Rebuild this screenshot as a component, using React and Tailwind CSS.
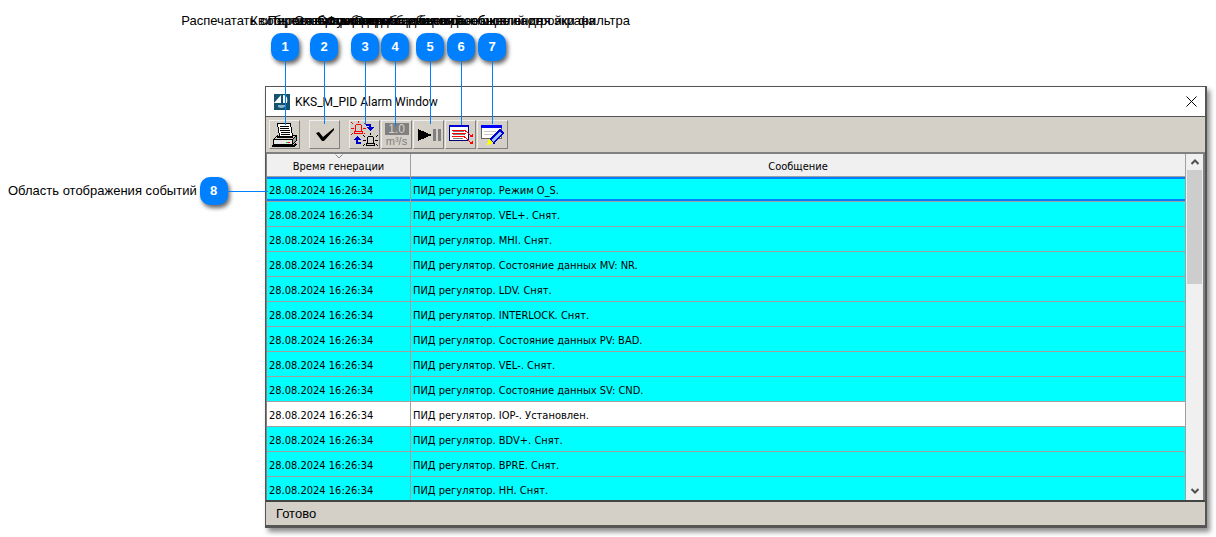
import React from 'react';

const callouts = [
    { n: 1, pos: 'left-[271px]', line: 'h-[64px]', text: 'Распечатать события на принтере' },
    { n: 2, pos: 'left-[310px]', line: 'h-[63px]', text: 'Квитировать сообщения' },
    { n: 3, pos: 'left-[351px]', line: 'h-[64px]', text: 'Переключить режим сообщений' },
    { n: 4, pos: 'left-[381px]', line: 'h-[65px]', text: 'Отобразить сообщения о данных' },
    { n: 5, pos: 'left-[416px]', line: 'h-[63px]', text: 'Остановить/возобновить обновление' },
    { n: 6, pos: 'left-[447px]', line: 'h-[64px]', text: 'Функция добавления сообщений для экрана' },
    { n: 7, pos: 'left-[478px]', line: 'h-[63px]', text: 'Открыть диалоговое окно настройки фильтра' },
];

const events = [
    'Режим O_S.',
    'VEL+. Снят.',
    'MHI. Снят.',
    'Состояние данных MV: NR.',
    'LDV. Снят.',
    'INTERLOCK. Снят.',
    'Состояние данных PV: BAD.',
    'VEL-. Снят.',
    'Состояние данных SV: CND.',
    'IOP-. Установлен.',
    'BDV+. Снят.',
    'BPRE. Снят.',
    'HH. Снят.',
];

const Badge = ({ children }) => (
    <span className="flex size-7 items-center justify-center rounded-[10px] bg-[#0080ff] text-[13px] font-bold text-white shadow-[2px_3px_4px_rgba(0,0,0,0.6)]">
        {children}
    </span>
);

const PrinterIcon = () => (
    <svg className="shrink-0" width="26" height="26" viewBox="0 0 26 26" shapeRendering="crispEdges">
        <path d="M5.5 1.5h13l2 13h-13z" fill="#fff" stroke="#000" />
        <path d="M8 4.5h9M8 6.5h9M8 8.5h10M9 10.5h9M9 12.5h9" stroke="#000" />
        <path d="M5.5 13.5l-4 4h19l4-4h-4" fill="#d4d0c8" stroke="#000" />
        <path d="M5 14.5h16" stroke="#000" strokeWidth="2" />
        <path d="M1.5 17.5h19v5h-19z" fill="#e8e8e8" stroke="#000" />
        <path d="M20.5 17.5l4-4v5l-4 4z" fill="#a0a0a0" stroke="#000" />
        <path d="M0 24h22l2-2" fill="none" stroke="#000" strokeWidth="2" />
        <path d="M14 20.5h2" stroke="#0c0" />
        <path d="M16 20.5h2" stroke="#f00" />
    </svg>
);

const CheckIcon = () => (
    <svg className="shrink-0" width="26" height="26" viewBox="0 0 26 26">
        <path d="M4 11l3-1 4 5L22 6v2L12 19h-2z" fill="#000" />
    </svg>
);

const SwitchIcon = () => (
    <svg className="shrink-0" width="27" height="27" viewBox="0 0 27 27" shapeRendering="crispEdges">
        <g fill="#f00">
            <path d="M5 3h5v1H5zM4 4h1v6H4zM10 4h1v6h-1zM3 10h9v1H3zM3 11h1v2H3zM11 11h1v2h-1zM3 12h9v1H3z" />
            <path d="M0 1h1v1H0zM1 2h1v1H1zM0 7h3v1H0zM1 12h1v1H1zM0 13h1v1H0zM7 0h1v2H7zM13 2h1v1h-1zM14 1h1v1h-1zM12 7h3v1h-3zM13 12h1v1h-1z" />
        </g>
        <g fill="#000">
            <path d="M17 15h5v1h-5zM16 16h1v6h-1zM22 16h1v6h-1zM15 22h9v1h-9zM15 23h1v2h-1zM23 23h1v2h-1zM15 24h9v1h-9z" />
            <path d="M12 14h1v1h-1zM13 15h1v1h-1zM12 19h3v1h-3zM13 23h1v1h-1zM12 24h1v1h-1zM19 12h1v2h-1zM25 15h1v1h-1zM26 14h1v1h-1zM24 19h3v1h-3zM25 23h1v1h-1zM26 24h1v1h-1z" />
        </g>
        <path d="M15 3h5v3h3l-4 4-4-4h3V5h-3z" fill="#00c" />
        <path d="M10 23H5v-4H2l4-4 4 4H7v2h3z" fill="#00c" />
    </svg>
);

const UnitsIcon = () => (
    <span className="flex flex-col items-center text-[#808080]">
        <span className="h-3 w-6 bg-[#808080] text-center text-[12px] leading-3 text-[#d4d0c8]">1.0</span>
        <span className="text-[11px] leading-3">m³/s</span>
    </span>
);

const PlayPauseIcon = () => (
    <svg className="shrink-0" width="26" height="26" viewBox="0 0 26 26" shapeRendering="crispEdges">
        <path d="M2 7l14 6-14 6z" fill="#000" />
        <path d="M17 7h3v12h-3zM22 7h3v12h-3z" fill="#808080" />
    </svg>
);

const ListIcon = () => (
    <svg className="shrink-0" width="26" height="26" viewBox="0 0 26 26" shapeRendering="crispEdges">
        <path d="M1.5 4.5h19v14h-19z" fill="#fff" stroke="#000070" />
        <path d="M1 3h20v2H1z" fill="#0000d0" />
        <path d="M4 8.500h13l7 6M4 11.500h14M4 14.500h12l8 7" fill="none" stroke="#f00" />
        <path d="M5 9.500h11M5 12.500h12M5 16.500h10" stroke="#000" strokeOpacity=".5" />
        <path d="M25 11v4h-4zM25 18v4h-4z" fill="#f00" />
    </svg>
);

const EditIcon = () => (
    <svg className="shrink-0" width="26" height="26" viewBox="0 0 26 26" shapeRendering="crispEdges">
        <path d="M1.5 4.5h20v12h-20z" fill="#fff" stroke="#606060" />
        <path d="M1 3h21v3H1z" fill="#00f" />
        <path d="M4 9.500h12M4 12.500h9" stroke="#c8c8c8" />
        <path d="M20 8l3 3-9 10-4-3z" fill="#9cc4ff" stroke="#0000d0" strokeWidth="1.500" />
        <path d="M9 17l4 4-6 2z" fill="#ff0" />
    </svg>
);

const tools = [
    { label: 'Печать', icon: <PrinterIcon />, gap: '' },
    { label: 'Квитировать', icon: <CheckIcon />, gap: 'ml-2' },
    { label: 'Режим', icon: <SwitchIcon />, gap: 'ml-2' },
    { label: 'Единицы', icon: <UnitsIcon />, gap: '' },
    { label: 'Пауза', icon: <PlayPauseIcon />, gap: '' },
    { label: 'Сообщения', icon: <ListIcon />, gap: '' },
    { label: 'Фильтр', icon: <EditIcon />, gap: '' },
];

const TitleBar = () => (
    <header className="flex h-[29px] items-center bg-white pr-1.5 pl-2">
        <svg className="mr-[5px] shrink-0" width="16" height="16" viewBox="0 0 16 16">
            <path d="M0 0h16v16H0z" fill="#14536f" />
            <path d="M0 9l7-8v8zM9 1c4 0 5 4 4 8H9z" fill="#fff" />
            <path d="M4 11h8c-1 3-5 4-8 2z" fill="#8bb5c8" />
        </svg>
        <h1 className="flex-1 font-[Roboto,sans-serif] text-[12px]">KKS_M_PID Alarm Window</h1>
        <button type="button" aria-label="Закрыть" className="p-0.5">
            <svg width="11" height="11" viewBox="0 0 11 11">
                <path d="M.5.5l10 10M10.5.5l-10 10" stroke="#000" />
            </svg>
        </button>
    </header>
);

const Toolbar = () => (
    <div className="flex h-9 items-center gap-px border-t border-[#555] bg-[#d4d0c8] pl-[3px]">
        {tools.map((tool) => (
            <button
                key={tool.label}
                type="button"
                aria-label={tool.label}
                className={`flex h-[29px] w-[31px] items-center justify-center border border-t-[#eee] border-r-[#808080] border-b-[#808080] border-l-[#eee] ${tool.gap}`}
            >
                {tool.icon}
            </button>
        ))}
    </div>
);

const EventTable = () => (
    <table className="flex-1 table-fixed border-separate border-spacing-0 font-['DejaVu_Sans_Condensed','Noto_Sans',sans-serif] text-[11px]">
        <colgroup>
            <col className="w-[144px]" />
            <col />
        </colgroup>
        <thead>
            <tr className="h-[23px] bg-[#f0f0f0]">
                <th className="relative border-r border-b border-[#a0a0a0] px-0 pt-1 pb-0 font-normal">
                    <svg className="absolute top-0 left-[68px]" width="8" height="5" viewBox="0 0 8 5">
                        <path d="M.5.5L4 4 7.5.5" fill="none" stroke="#888" />
                    </svg>
                    Время генерации
                </th>
                <th className="border-r border-b border-[#a0a0a0] px-0 pt-1 pb-0 font-normal">Сообщение</th>
            </tr>
        </thead>
        <tbody>
            {events.map((text, i) => (
                <tr
                    key={text}
                    className={`h-[25px] ${i === 9 ? 'bg-white' : 'bg-[#00ffff]'} ${i === 0 ? '[&>td]:shadow-[inset_0_2px_#0080ff,inset_0_-2px_#0080ff]' : ''}`}
                >
                    <td className="border-r border-b border-[#a0a0a0] px-0.5 pt-1 pb-0">28.08.2024 16:26:34</td>
                    <td className="border-r border-b border-[#a0a0a0] px-0.5 pt-1 pb-0">ПИД регулятор. {text}</td>
                </tr>
            ))}
        </tbody>
    </table>
);

const ScrollBar = () => (
    <div className="flex w-[17px] flex-col items-center bg-[#f0f0f0]">
        <button type="button" aria-label="Вверх" className="flex h-4 items-center">
            <svg width="8" height="6" viewBox="0 0 8 6">
                <path d="M.5 5L4 1.5 7.5 5" fill="none" stroke="#505050" strokeWidth="2" />
            </svg>
        </button>
        <div className="h-[114px] w-[15px] bg-[#cdcdcd]" />
        <button type="button" aria-label="Вниз" className="mt-auto flex h-[19px] items-center">
            <svg width="8" height="6" viewBox="0 0 8 6">
                <path d="M.5 1L4 4.5 7.5 1" fill="none" stroke="#505050" strokeWidth="2" />
            </svg>
        </button>
    </div>
);

const App = () => {
    return (
        <div className="relative bg-white pt-[86px] pr-[9px] pb-2 pl-[265px] font-['Liberation_Sans',Arial,sans-serif] text-black">
            <main className="border border-r-2 border-b-[3px] border-[#555] bg-white shadow-[3px_4px_5px_rgba(0,0,0,0.45)]">
                <TitleBar />
                <Toolbar />
                <div className="flex h-[348px] items-start overflow-hidden border-t-2 border-r-2 border-l border-[#808080]">
                    <EventTable />
                    <div className="flex h-full">
                        <ScrollBar />
                    </div>
                </div>
                <footer className="flex h-[25px] items-center border-t-2 border-[#444] bg-[#d4d0c8] pl-[10px] text-[13px]">Готово</footer>
            </main>

            {/* Callouts over the toolbar */}
            {callouts.map((c) => (
                <div key={c.n} className={`absolute top-[13px] flex w-7 flex-col items-center ${c.pos}`}>
                    <span className="mb-1 text-[13px] leading-4 whitespace-nowrap">{c.text}</span>
                    <Badge>{c.n}</Badge>
                    <span className={`w-px bg-[#0080ff] ${c.line}`} />
                </div>
            ))}

            {/* Callout for the event area */}
            <div className="absolute top-[177px] left-2 flex items-center">
                <span className="mr-[3px] text-[13px] whitespace-nowrap">Область отображения событий</span>
                <Badge>8</Badge>
                <span className="h-px w-10 bg-[#0080ff]" />
            </div>
        </div>
    );
};

export default App;
